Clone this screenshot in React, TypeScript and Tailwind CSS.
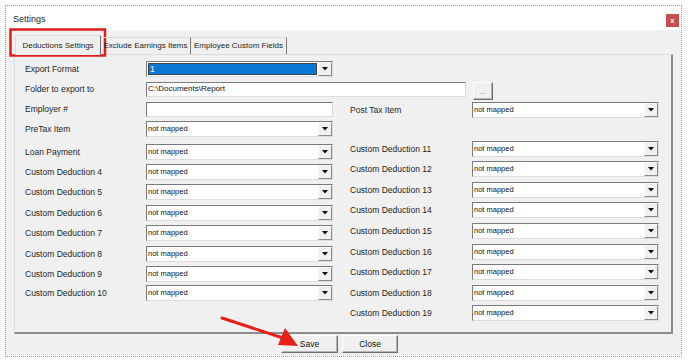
import React from "react";

const leftRows = [
  { label: "Employer #", kind: "text", mt: "mt-0" },
  { label: "PreTax Item", kind: "combo", mt: "mt-[4px]" },
  { label: "Loan Payment", kind: "combo", mt: "mt-[7px]" },
  { label: "Custom Deduction 4", kind: "combo", mt: "mt-[4px]" },
  { label: "Custom Deduction 5", kind: "combo", mt: "mt-[4px]" },
  { label: "Custom Deduction 6", kind: "combo", mt: "mt-[5px]" },
  { label: "Custom Deduction 7", kind: "combo", mt: "mt-[4px]" },
  { label: "Custom Deduction 8", kind: "combo", mt: "mt-[5px]" },
  { label: "Custom Deduction 9", kind: "combo", mt: "mt-[4px]" },
  { label: "Custom Deduction 10", kind: "combo", mt: "mt-[3px]" },
];

const rightRows = [
  { label: "Post Tax Item", mt: "mt-[1px]" },
  { label: "Custom Deduction 11", mt: "mt-[23px]" },
  { label: "Custom Deduction 12", mt: "mt-[4px]" },
  { label: "Custom Deduction 13", mt: "mt-[5px]" },
  { label: "Custom Deduction 14", mt: "mt-[4px]" },
  { label: "Custom Deduction 15", mt: "mt-[5px]" },
  { label: "Custom Deduction 16", mt: "mt-[5px]" },
  { label: "Custom Deduction 17", mt: "mt-[4px]" },
  { label: "Custom Deduction 18", mt: "mt-[5px]" },
  { label: "Custom Deduction 19", mt: "mt-[4px]" },
];

const Arrow = () => (
  <div className="w-[14px] h-full flex items-center justify-center bg-[#f0f0f0] border border-t-[#f8f8f8] border-l-[#f8f8f8] border-r-[#8a8a8a] border-b-[#8a8a8a]">
    <svg width="6" height="4" viewBox="0 0 6 4">
      <polygon points="0,0 6,0 3,3.5" fill="#111" />
    </svg>
  </div>
);

const Combo = ({ value = "not mapped", active = false }: { value?: string; active?: boolean }) => (
  <div className="w-[187px] h-[16px] flex bg-white border border-t-[#7a7a7a] border-l-[#7a7a7a] border-r-[#dcdcdc] border-b-[#dcdcdc]">
    {active ? (
      <div className="flex-1 m-[1px] bg-[#0a78d4] border border-[#444] flex items-center pl-[1px] text-white text-[8.5px] leading-none">
        {value}
      </div>
    ) : (
      <div className="flex-1 flex items-center pl-[1px] text-[7.5px] leading-none text-[#111]">{value}</div>
    )}
    <Arrow />
  </div>
);

const TextBox = ({ value = "", w }: { value?: string; w: string }) => (
  <div
    className={
      w +
      " h-[15px] bg-white border border-t-[#7a7a7a] border-l-[#7a7a7a] border-r-[#dcdcdc] border-b-[#dcdcdc] flex items-center pl-[1px] text-[8px] leading-none text-[#111]"
    }
  >
    {value}
  </div>
);

const Label = ({ children, w }: { children: React.ReactNode; w: string }) => (
  <div className={w + " text-[8.5px] leading-none text-[#1e1e1e]"}>{children}</div>
);

const Button = ({ children, w }: { children: React.ReactNode; w: string }) => (
  <button
    className={
      w +
      " h-[18px] bg-[#f0f0f0] border border-t-white border-l-white border-r-[#6e6e6e] border-b-[#6e6e6e] shadow-[inset_-1px_-1px_0_#b5b5b5] text-[8.5px] leading-none text-[#111]"
    }
  >
    {children}
  </button>
);

export default function App() {
  return (
    <div className="relative w-[688px] h-[360px] bg-white p-[5px] font-['Liberation_Sans',Arial,sans-serif]">
      <div className="w-[677px] h-[352px] border border-dotted border-[#9c9c9c] flex flex-col">
        {/* title bar */}
        <div className="h-[24px] bg-white flex justify-between pl-[7px] pr-[2px]">
          <div className="self-center text-[9px] leading-none text-[#1e1e1e] mt-[2px]">Settings</div>
          <div className="mt-[8px] w-[13px] h-[13px] bg-[#c94f4f] flex items-center justify-center text-white text-[7px] font-bold leading-none">
            x
          </div>
        </div>

        <div className="flex-1 bg-[#f0f0f0] px-[8px] pt-[5px]">
          {/* tabs */}
          <div className="flex items-end pl-[1px] relative z-10">
            <div className="w-[86px] h-[20px] -mb-[1px] bg-[#f0f0f0] border border-b-0 border-t-[#dcdcdc] border-l-[#dcdcdc] border-r-[#6e6e6e] flex items-center justify-center text-[8px] leading-none text-[#1e1e1e]">
              Deductions Settings
            </div>
            <div className="w-[90px] h-[17px] border-t border-r border-t-[#dcdcdc] border-r-[#7a7a7a] flex items-center justify-center text-[8px] leading-none text-[#1e1e1e]">
              Exclude Earnings Items
            </div>
            <div className="w-[96px] h-[17px] border-t border-r border-t-[#dcdcdc] border-r-[#7a7a7a] flex items-center justify-center text-[8px] leading-none text-[#1e1e1e]">
              Employee Custom Fields
            </div>
          </div>

          {/* tab panel */}
          <div className="h-[280px] border border-t-[#dcdcdc] border-l-[#dcdcdc] border-r-2 border-b-2 border-r-[#8c8c8c] border-b-[#8c8c8c] pl-[10px] pt-[6px]">
            <div className="flex items-center h-[16px]">
              <Label w="w-[121px]">Export Format</Label>
              <Combo value="1" active />
            </div>
            <div className="flex items-center h-[18px] mt-[3px]">
              <Label w="w-[121px]">Folder to export to</Label>
              <TextBox w="w-[320px]" value="C:\Documents\Report" />
              <div className="ml-[7px]">
                <Button w="w-[20px]">
                  <span className="text-[#9a6a6a] text-[7px]">...</span>
                </Button>
              </div>
            </div>

            <div className="flex mt-[3px]">
              <div className="w-[308px] flex flex-col">
                {leftRows.map((r) => (
                  <div key={r.label} className={r.mt + " flex items-center h-[16px]"}>
                    <Label w="w-[121px]">{r.label}</Label>
                    {r.kind === "text" ? <TextBox w="w-[187px]" /> : <Combo />}
                  </div>
                ))}
              </div>
              <div className="ml-[17px] flex flex-col">
                {rightRows.map((r) => (
                  <div key={r.label} className={r.mt + " flex items-center h-[16px]"}>
                    <Label w="w-[122px]">{r.label}</Label>
                    <Combo />
                  </div>
                ))}
              </div>
            </div>
          </div>

          {/* buttons */}
          <div className="flex justify-center gap-[4px] mt-[1px] pr-[8px]">
            <Button w="w-[57px]">Save</Button>
            <Button w="w-[56px]">Close</Button>
          </div>
        </div>
      </div>

      {/* annotations */}
      <svg className="absolute left-0 top-0 pointer-events-none" width="688" height="360" viewBox="0 0 688 360">
        <rect x="10.5" y="29.5" width="94.5" height="26" fill="none" stroke="#e01e1e" strokeWidth="2.5" />
        <line x1="222" y1="318" x2="286" y2="339" stroke="#e8201c" strokeWidth="3" strokeLinecap="round" />
        <polygon points="298,346 278,345 285,328" fill="#e8201c" />
      </svg>
    </div>
  );
}
